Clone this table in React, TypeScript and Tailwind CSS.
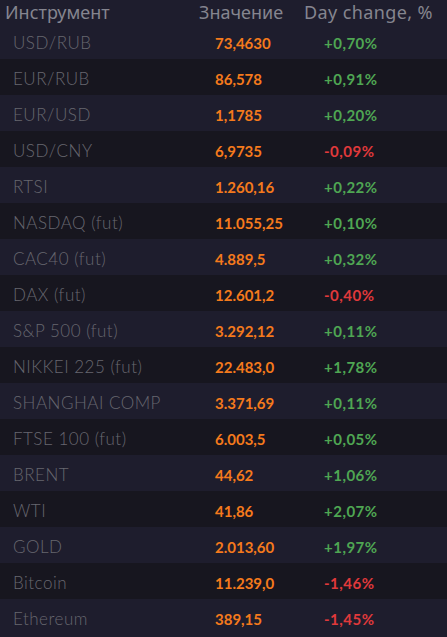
const rows = [
  { name: "USD/RUB", value: "73,4630", change: "+0,70%" },
  { name: "EUR/RUB", value: "86,578", change: "+0,91%" },
  { name: "EUR/USD", value: "1,1785", change: "+0,20%" },
  { name: "USD/CNY", value: "6,9735", change: "-0,09%" },
  { name: "RTSI", value: "1.260,16", change: "+0,22%" },
  { name: "NASDAQ (fut)", value: "11.055,25", change: "+0,10%" },
  { name: "CAC40 (fut)", value: "4.889,5", change: "+0,32%" },
  { name: "DAX (fut)", value: "12.601,2", change: "-0,40%" },
  { name: "S&P 500 (fut)", value: "3.292,12", change: "+0,11%" },
  { name: "NIKKEI 225 (fut)", value: "22.483,0", change: "+1,78%" },
  { name: "SHANGHAI COMP", value: "3.371,69", change: "+0,11%" },
  { name: "FTSE 100 (fut)", value: "6.003,5", change: "+0,05%" },
  { name: "BRENT", value: "44,62", change: "+1,06%" },
  { name: "WTI", value: "41,86", change: "+2,07%" },
  { name: "GOLD", value: "2.013,60", change: "+1,97%" },
  { name: "Bitcoin", value: "11.239,0", change: "-1,46%" },
  { name: "Ethereum", value: "389,15", change: "-1,45%" },
];

export default function App() {
  return (
    <div className="min-h-screen w-full bg-[#1e1d2d]">
      {/* header */}
      <div className="flex h-[23px] items-center pt-px text-[18px] leading-none text-[#85858f] font-['Noto_Sans',sans-serif]">
        <div className="w-[199px] pl-[5px]">Инструмент</div>
        <div className="w-[105px]">Значение</div>
        <div className="tracking-[0.4px]">Day change, %</div>
      </div>

      {rows.map((row, i) => (
        <div
          key={row.name}
          className={`flex h-9 items-center pt-1 ${i % 2 === 0 ? "bg-[#1e1d2d]" : "bg-[#17161f]"}`}
        >
          <div className="w-[215px] pl-[13px] text-[17px] font-light tracking-[0.5px] text-[#67676f] font-['Lato',sans-serif]">
            {row.name}
          </div>
          <div className="w-[109px] text-[15px] font-bold text-[#f57a1c] font-['Lato',sans-serif]">
            {row.value}
          </div>
          <div
            className={`text-[15px] font-bold tracking-[0.5px] font-['Lato',sans-serif] ${row.change.startsWith("-") ? "text-[#e0393b]" : "text-[#4fa653]"}`}
          >
            {row.change}
          </div>
        </div>
      ))}
    </div>
  );
}
